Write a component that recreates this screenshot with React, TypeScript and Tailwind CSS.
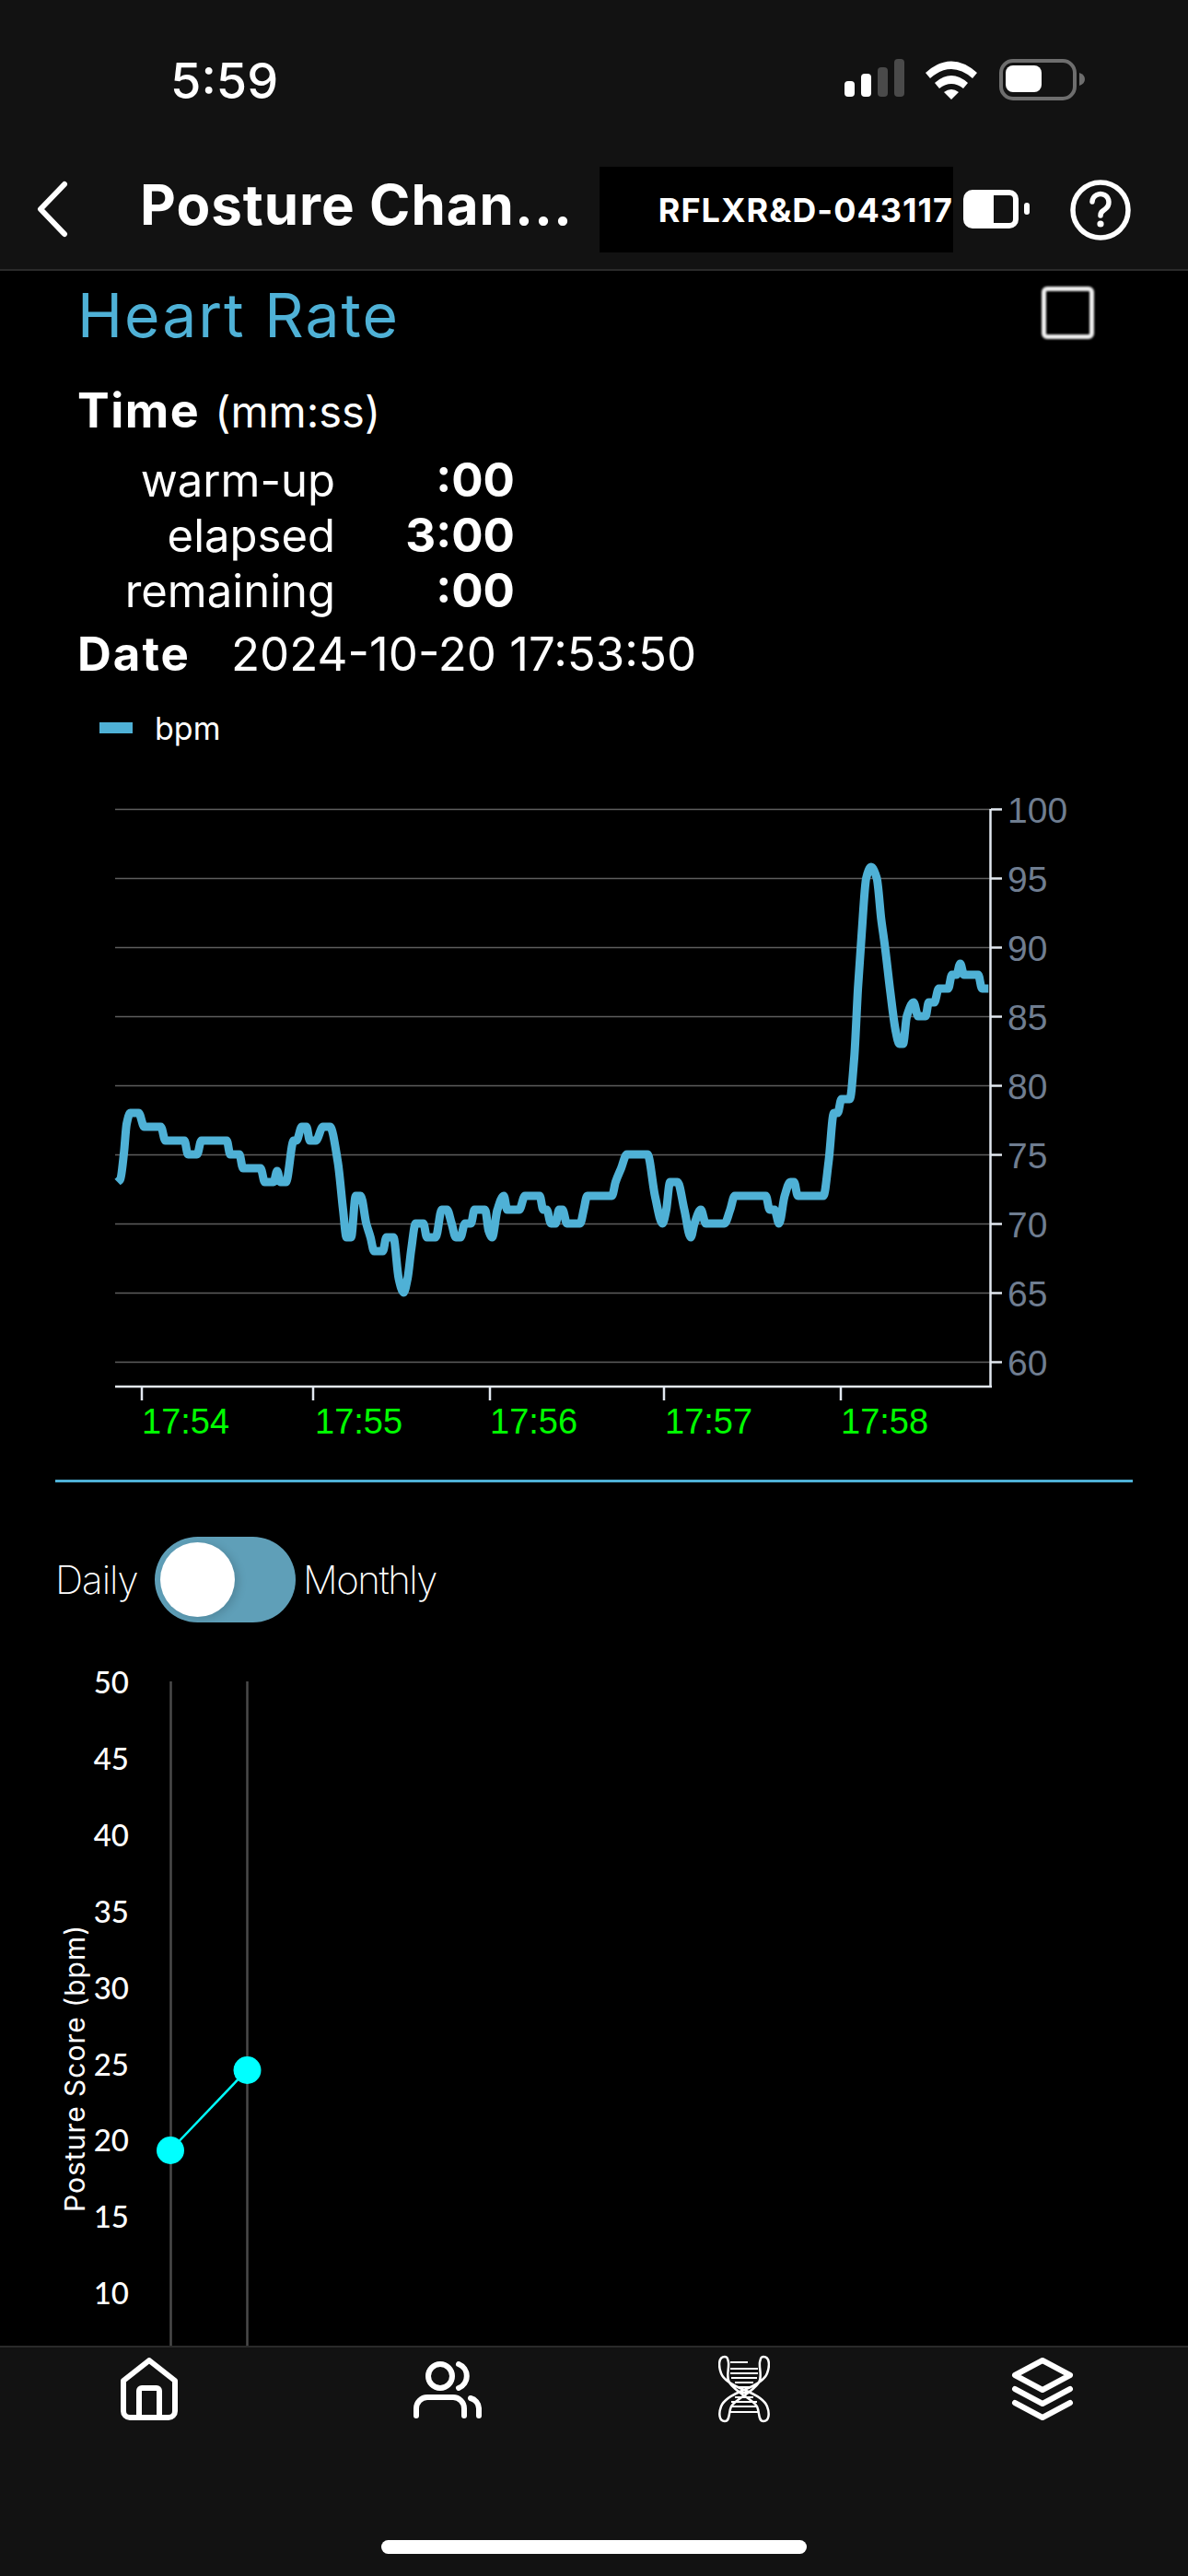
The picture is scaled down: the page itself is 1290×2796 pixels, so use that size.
import React from "react";

const Z3: [number, number][] = [[72,73],[80,73.2],[90,75],[98,77.2],[108,78],[132,78],[148,77],[195,77],[208,76],[262,76],[272,75],[298,75],[310,76],[382,76],[392,75],[418,75],[428,74],[478,74],[490,73],[515,73],[525,73.8],[535,73],[550,73],[572,76],[580,76],[595,77],[608,77],[618,76],[635,76],[655,77],[675,77],[697,74.5],[712,71],[722,69],[735,69],[748,72],[762,72],[778,70],[790,69],[800,68],[825,68],[835,69],[855,69],[870,66],[884,65],[895,66],[905,68],[918,70],[940,70],[950,69],[975,69],[992,71],[1007,71],[1020,70],[1032,69],[1045,69],[1058,70],[1075,70],[1085,71],[1115,71],[1125,69.5],[1135,69],[1150,71],[1168,72],[1178,71],[1212,71],[1228,72],[1270,72],[1280,71],[1290,71],[1302,70],[1315,70],[1325,71],[1335,71],[1347,70],[1385,70],[1395,71],[1405,72],[1475,72]];
const Z4: [number, number][] = [[45,73],[60,74],[75,75],[130,75],[150,72],[170,70],[180,71],[190,73],[210,73],[228,71],[245,69],[255,70],[272,71],[285,70],[335,70],[350,71],[362,72],[445,72],[455,71],[468,71],[480,70],[495,72],[510,73],[520,73],[530,72],[598,72],[612,74.5],[626,78],[636,78],[646,79],[668,79],[680,82],[690,87],[700,91],[712,95],[725,95.8],[740,95],[752,92],[762,90],[775,87],[790,84],[800,83],[810,83],[820,85],[838,86],[850,85],[870,85],[878,86],[893,86],[905,87],[930,87],[940,88],[952,88],[962,88.8],[972,88],[1010,88],[1020,87],[1037,87]];

const yOf = (b: number) => 878 + (100 - b) * 15;
const points: [number, number][] = [
  ...Z3.map(([x, b]): [number, number] => [100 + x / 2.613, yOf(b)]),
  ...Z4.map(([x, b]): [number, number] => [650 + x / 2.45, yOf(b)]),
];

function monotonePath(p: [number, number][]) {
  const n = p.length;
  const d: number[] = [];
  const m: number[] = [];
  for (let i = 0; i < n - 1; i++) d.push((p[i + 1][1] - p[i][1]) / (p[i + 1][0] - p[i][0]));
  m.push(d[0]);
  for (let i = 1; i < n - 1; i++) {
    m.push(d[i - 1] * d[i] <= 0 ? 0 : (2 * d[i - 1] * d[i]) / (d[i - 1] + d[i]));
  }
  m.push(d[n - 2]);
  let s = `M${p[0][0].toFixed(1)} ${p[0][1].toFixed(1)}`;
  for (let i = 0; i < n - 1; i++) {
    const h = (p[i + 1][0] - p[i][0]) / 3;
    s += `C${(p[i][0] + h).toFixed(1)} ${(p[i][1] + m[i] * h).toFixed(1)} ${(p[i + 1][0] - h).toFixed(1)} ${(p[i + 1][1] - m[i + 1] * h).toFixed(1)} ${p[i + 1][0].toFixed(1)} ${p[i + 1][1].toFixed(1)}`;
  }
  return s;
}

const font = { fontFamily: "Inter,'Noto Sans',sans-serif" };

function StatusBar() {
  return (
    <div className="h-[181px] pl-[185px] pr-[108px] flex items-start justify-between">
      <span className="mt-[56px] text-[54px] leading-[64px] font-medium text-white" style={{ fontFamily: "Inter, sans-serif" }}>5:59</span>
      <svg width="292" height="46" viewBox="0 0 292 46" className="mt-[64px] -mr-[1px]">
        <rect x="26" y="24" width="11" height="17" rx="4" fill="#fff" />
        <rect x="44" y="16" width="11" height="25" rx="4" fill="#fff" />
        <rect x="62" y="9" width="11" height="32" rx="4" fill="#4a4a4a" />
        <rect x="80" y="0" width="11" height="41" rx="4" fill="#4a4a4a" />
        <path d="M114 15Q142 -10 170 15L165 21Q142 1 119 21ZM124 26Q142 10 160 26L155 32Q142 22 129 32ZM134 36Q142 30 150 36L142 44Z" fill="#fff" />
        <rect x="196" y="2" width="80" height="41" rx="13" fill="none" stroke="#6e6e6e" strokeWidth="4" />
        <rect x="201" y="7" width="39" height="29" rx="8" fill="#fff" />
        <path d="M281 15Q287 17 287 22Q287 27 281 29Z" fill="#6e6e6e" />
      </svg>
    </div>
  );
}

function Header() {
  return (
    <div className="h-[113px] flex items-start border-b-2 border-[#2a2a2a]">
      <svg width="40" height="62" viewBox="0 0 40 62" className="ml-[37px] mt-[15px] shrink-0">
        <path d="M33 4L7 31L33 58" fill="none" stroke="#fff" strokeWidth="6" strokeLinecap="round" strokeLinejoin="round" />
      </svg>
      <span className="ml-[75px] mt-[3px] w-[499px] shrink-0 text-[60px] leading-[76px] font-bold text-white tracking-[1px] whitespace-nowrap" style={font}>Posture Chan...</span>
      <div className="w-[384px] h-[93px] bg-black shrink-0 flex items-center justify-end">
        <span className="text-[36px] font-bold text-white tracking-[1px] whitespace-nowrap" style={font}>RFLXR&amp;D-043117</span>
      </div>
      <svg width="76" height="44" viewBox="0 0 76 44" className="ml-[11px] mt-[25px] shrink-0">
        <rect x="3" y="3" width="54" height="36" rx="7" fill="none" stroke="#fff" strokeWidth="6" />
        <path d="M3 10a7 7 0 0 1 7-7H33V36H3Z" fill="#fff" />
        <rect x="66" y="14" width="6" height="13" rx="3" fill="#fff" />
      </svg>
      <svg width="66" height="66" viewBox="0 0 66 66" className="ml-[40px] mt-[14px] shrink-0">
        <circle cx="33" cy="33" r="30" fill="none" stroke="#fff" strokeWidth="5.5" />
        <path d="M24 24a9 9 0 1 1 14 8c-3 2-5 3-5 7" fill="none" stroke="#fff" strokeWidth="5.5" strokeLinecap="round" />
        <circle cx="33" cy="48" r="3.6" fill="#fff" />
      </svg>
    </div>
  );
}

function TimeRow({ label, value }: { label: string; value: string }) {
  return (
    <div className="flex h-[60px] items-baseline">
      <span className="w-[364px] text-right text-[49px] leading-[60px] text-white" style={font}>{label}</span>
      <span className="w-[195px] text-right text-[51px] leading-[60px] font-bold text-white" style={font}>{value}</span>
    </div>
  );
}

function HeartChart() {
  const grid = [100, 95, 90, 85, 80, 75, 70, 65, 60];
  const ticks: [number, string, number][] = [[154, "17:54", 154], [340, "17:55", 342], [532, "17:56", 532], [721, "17:57", 722], [913, "17:58", 913]];
  return (
    <svg width="1290" height="730" viewBox="0 850 1290 730" className="block shrink-0">
      {grid.map((g) => (
        <g key={g}>
          <line x1="125" x2="1075" y1={yOf(g) + 0.5} y2={yOf(g) + 0.5} stroke="#5e5e5e" strokeWidth="1.5" />
          <line x1="1076" x2="1088" y1={yOf(g) + 0.5} y2={yOf(g) + 0.5} stroke="#e2e8f0" strokeWidth="2.5" />
          <text x="1094" y={yOf(g) + 15} fontSize="39" fill="#6f7d90" fontFamily="'Liberation Sans',sans-serif">{g}</text>
        </g>
      ))}
      <line x1="125" x2="1077" y1="1505" y2="1505" stroke="#e2e8f0" strokeWidth="2.5" />
      <line x1="1075.5" x2="1075.5" y1="878" y2="1506" stroke="#e2e8f0" strokeWidth="2.5" />
      {ticks.map(([x, t, tx]) => (
        <g key={t}>
          <line x1={x} x2={x} y1="1505" y2="1520" stroke="#e2e8f0" strokeWidth="2.5" />
          <text x={tx} y="1556" fontSize="38" fill="#00ff00" fontFamily="'Liberation Sans',sans-serif">{t}</text>
        </g>
      ))}
      <path d={monotonePath(points)} fill="none" stroke="#4fb1d6" strokeWidth="9" strokeLinejoin="round" />
    </svg>
  );
}

function PostureChart() {
  const vals = [50, 45, 40, 35, 30, 25, 20, 15, 10];
  return (
    <svg width="1290" height="758" viewBox="0 1790 1290 758" className="block shrink-0">
      {vals.map((v, i) => (
        <text key={v} x="140" y={1826 + i * 82.9 + 12} textAnchor="end" fontSize="33" fontWeight="500" fill="#fff" fontFamily="Lato,sans-serif">{v}</text>
      ))}
      <line x1="185.5" x2="185.5" y1="1825" y2="2548" stroke="#4a4a4a" strokeWidth="2.5" />
      <line x1="268.5" x2="268.5" y1="1825" y2="2548" stroke="#4a4a4a" strokeWidth="2.5" />
      <line x1="185" y1="2334" x2="268" y2="2247" stroke="#00ffff" strokeWidth="2.5" />
      <circle cx="185" cy="2334" r="15" fill="#00ffff" />
      <circle cx="268.5" cy="2247" r="15" fill="#00ffff" />
      <text transform="translate(92 2401) rotate(-90)" fontSize="30" letterSpacing="1" fill="#fff" fontFamily="Inter,sans-serif">Posture Score (bpm)</text>
    </svg>
  );
}

function BottomNav() {
  return (
    <div className="h-[250px] shrink-0 border-t-2 border-[#2a2a2a] bg-[#121212] relative">
      <div className="h-[90px] pl-[131px] flex items-start">
        <svg width="62" height="68" viewBox="0 0 62 68" className="mt-[11px] shrink-0">
          <path d="M31 3L59 25V58a7 7 0 0 1-7 7H10a7 7 0 0 1-7-7V25Z" fill="none" stroke="#fff" strokeWidth="6" strokeLinejoin="round" />
          <path d="M20 65V36a3 3 0 0 1 3-3H39a3 3 0 0 1 3 3V65" fill="none" stroke="#fff" strokeWidth="6" />
        </svg>
        <svg width="74" height="64" viewBox="0 0 74 64" className="ml-[256px] mt-[14px] shrink-0">
          <circle cx="29" cy="17" r="13" fill="none" stroke="#fff" strokeWidth="6" />
          <path d="M49 4A14 14 0 0 1 49 30" fill="none" stroke="#fff" strokeWidth="6" strokeLinecap="round" />
          <path d="M3 60V52A12 12 0 0 1 15 40H43A12 12 0 0 1 55 52V60" fill="none" stroke="#fff" strokeWidth="6" strokeLinecap="round" />
          <path d="M62 41A12 12 0 0 1 71 52V60" fill="none" stroke="#fff" strokeWidth="6" strokeLinecap="round" />
        </svg>
        <svg width="56" height="74" viewBox="0 0 56 74" className="ml-[257px] mt-[8px] shrink-0">
          <path d="M7 2C0 2 0 12 3 20C6 28 18 34 28 38C38 42 50 48 53 56C56 64 55 72 49 72C43 72 45 62 42 56C38 48 20 42 12 30C8 24 12 14 11 8C10 4 10 2 7 2Z" fill="none" stroke="#fff" strokeWidth="2.5" />
          <path d="M49 2C56 2 56 12 53 20C50 28 38 34 28 38C18 42 6 48 3 56C0 64 1 72 7 72C13 72 11 62 14 56C18 48 36 42 44 30C48 24 44 14 45 8C46 4 46 2 49 2Z" fill="none" stroke="#fff" strokeWidth="2.5" />
          <path d="M13 8H32M13 15H43M13 20H43M14 25H42M18 30H38M22 35H34M22 41H34M18 46H38M14 51H42M13 56H43M13 62H43" stroke="#fff" strokeWidth="2.2" />
        </svg>
        <svg width="68" height="68" viewBox="0 0 68 68" className="ml-[262px] mt-[11px] shrink-0">
          <path d="M34 3L64 19L34 35L4 19Z" fill="none" stroke="#fff" strokeWidth="6" strokeLinejoin="round" />
          <path d="M4 34L34 50L64 34" fill="none" stroke="#fff" strokeWidth="6" strokeLinecap="round" strokeLinejoin="round" />
          <path d="M4 49L34 65L64 49" fill="none" stroke="#fff" strokeWidth="6" strokeLinecap="round" strokeLinejoin="round" />
        </svg>
      </div>
      <div className="absolute left-[414px] top-[209px] w-[462px] h-[15px] rounded-full bg-white" />
    </div>
  );
}

export default function App() {
  return (
    <div className="w-[1290px] h-[2796px] bg-black flex flex-col overflow-hidden">
      <div className="bg-[#121212] shrink-0">
        <StatusBar />
        <Header />
      </div>
      <div className="flex-1 min-h-0 overflow-hidden">
        <div className="pl-[84px] pr-[102px] h-[106px] flex items-start justify-between">
          <span className="mt-[8px] text-[66px] leading-[80px] tracking-[2px] text-[#4fb1d6]" style={font}>Heart Rate</span>
          <div className="mt-[17px] w-[57px] h-[57px] rounded-[6px] border-[5px] border-[#eeeeee] blur-[0.8px]" />
        </div>
        <div className="pl-[84px] flex items-baseline h-[91px]">
          <span className="text-[52px] leading-[91px] font-bold tracking-[1.5px] text-white" style={font}>Time</span>
          <span className="ml-[16px] text-[47px] leading-[91px] text-white" style={font}>(mm:ss)</span>
        </div>
        <TimeRow label="warm-up" value=":00" />
        <TimeRow label="elapsed" value="3:00" />
        <TimeRow label="remaining" value=":00" />
        <div className="pl-[84px] flex items-baseline h-[78px]">
          <span className="w-[167px] text-[51px] leading-[78px] font-bold tracking-[2px] text-white" style={font}>Date</span>
          <span className="text-[51px] leading-[78px] text-white" style={font}>2024-10-20 17:53:50</span>
        </div>
        <div className="pl-[108px] h-[101px] flex items-start">
          <div className="mt-[35px] w-[36px] h-[12px] bg-[#4fb1d6]" />
          <span className="ml-[24px] mt-[22px] text-[34px] leading-[40px] text-white" style={font}>bpm</span>
        </div>
        <HeartChart />
        <div className="ml-[60px] mt-[26px] w-[1170px] h-[3px] bg-[#4fb1d6]" />
        <div className="mt-[59px] h-[93px] pl-[60px] flex items-center">
          <span className="w-[108px] text-[42px] font-extralight tracking-[-1px] text-white" style={font}>Daily</span>
          <div className="w-[153px] h-[93px] rounded-full bg-[#5f9fb8] p-[6px] shrink-0">
            <div className="w-[81px] h-[81px] rounded-full bg-white shadow-[4px_2px_10px_rgba(0,0,0,0.15)]" />
          </div>
          <span className="ml-[8px] text-[42px] font-extralight tracking-[-1.5px] text-white" style={font}>Monthly</span>
        </div>
        <div className="mt-[29px]">
          <PostureChart />
        </div>
      </div>
      <BottomNav />
    </div>
  );
}
